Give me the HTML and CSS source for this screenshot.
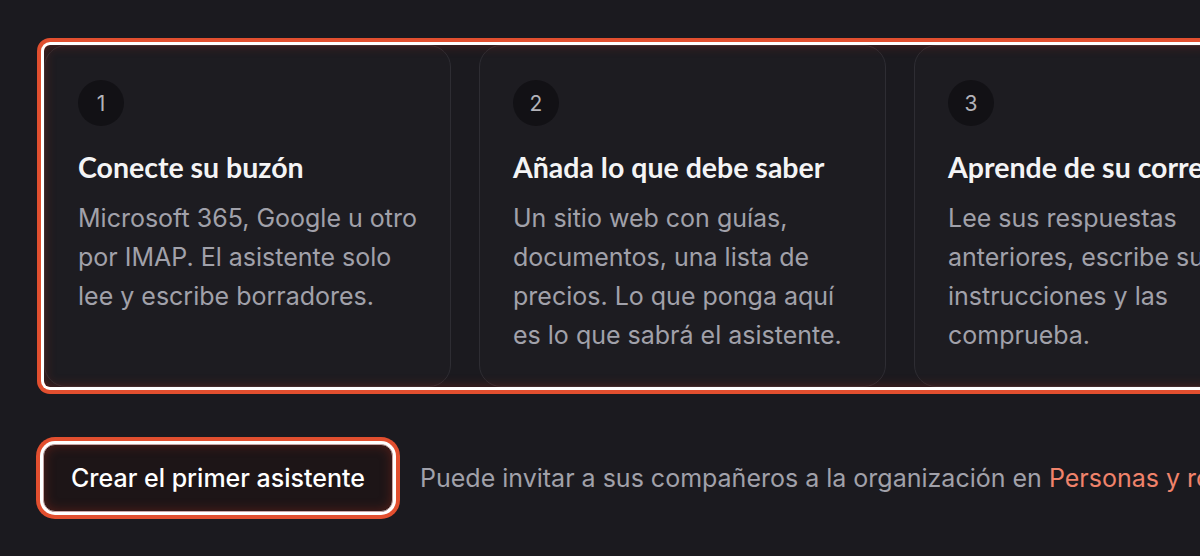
FILE: index.html
```html
<!DOCTYPE html>
<html lang="es">
<head>
  <meta charset="UTF-8">
  <meta name="viewport" content="width=device-width, initial-scale=1.0">
  <title>Primeros pasos</title>
  <link rel="stylesheet" href="styles.css">
</head>
<body>

<div class="page">
  <div class="steps highlight">
    <div class="step">
      <div class="step-num">1</div>
      <h3 class="step-title">Conecte su buzón</h3>
      <p class="step-text">Microsoft 365, Google u otro por IMAP. El asistente solo lee y escribe borradores.</p>
    </div>
    <div class="step">
      <div class="step-num">2</div>
      <h3 class="step-title">Añada lo que debe saber</h3>
      <p class="step-text">Un sitio web con guías, documentos, una lista de precios. Lo que ponga aquí es lo que sabrá el asistente.</p>
    </div>
    <div class="step">
      <div class="step-num">3</div>
      <h3 class="step-title">Aprende de su correo</h3>
      <p class="step-text">Lee sus respuestas anteriores, escribe sus instrucciones y las comprueba.</p>
    </div>
  </div>

  <div class="actions">
    <button class="btn-primary highlight">Crear el primer asistente</button>
    <p class="hint">Puede invitar a sus compañeros a la organización en <a href="#" class="link">Personas y roles</a>.</p>
  </div>
</div>

</body>
</html>
```

FILE: styles.css
```css
html, body {
  margin: 0;
  padding: 0;
  height: 556px;
  overflow: hidden;
}

body {
  background-color: #1b1a1f;
  font-family: Inter, "Noto Sans", sans-serif;
}

.page {
  padding: 45px 0 0 44px;
  width: 1400px;
}

.highlight {
  position: relative;
  box-shadow: 0 0 0 3px #ffffff, 0 0 0 7px #e24f2f;
}

.highlight::after {
  content: "";
  position: absolute;
  inset: 0;
  border-radius: inherit;
  box-shadow: inset 0 0 12px rgba(190, 50, 30, 0.35);
  pointer-events: none;
}

.steps {
  display: flex;
  gap: 28px;
  border-radius: 6px;
}

.step {
  width: 407px;
  height: 342px;
  box-sizing: border-box;
  padding: 34px 33px;
  background-color: #1d1c21;
  border: 1px solid #2e2d33;
  border-radius: 22px;
  flex-shrink: 0;
}

.step-num {
  width: 46px;
  height: 46px;
  border-radius: 50%;
  background-color: #121115;
  color: #b3b3b9;
  font-size: 21px;
  display: flex;
  align-items: center;
  justify-content: center;
}

.step-title {
  margin: 23px 0 0;
  font-family: Lato, sans-serif;
  font-weight: 700;
  font-size: 28.5px;
  line-height: 36px;
  color: #f4f4f5;
}

.step-text {
  margin: 14px 0 0;
  font-size: 25px;
  line-height: 39px;
  color: #a1a1aa;
}

.actions {
  display: flex;
  align-items: center;
  gap: 27px;
  margin-top: 57px;
}

.btn-primary {
  margin-left: -1px;
  width: 350px;
  height: 68px;
  border-radius: 12px;
  border: 1px solid #c8a6a4;
  background-color: #1d1517;
  color: #ffffff;
  font-family: Inter, sans-serif;
  font-size: 25px;
  font-weight: 500;
  cursor: pointer;
}

.hint {
  margin: 0;
  font-size: 25px;
  color: #a1a1aa;
  white-space: nowrap;
}

.link {
  color: #f0836b;
  text-decoration: none;
}
```
